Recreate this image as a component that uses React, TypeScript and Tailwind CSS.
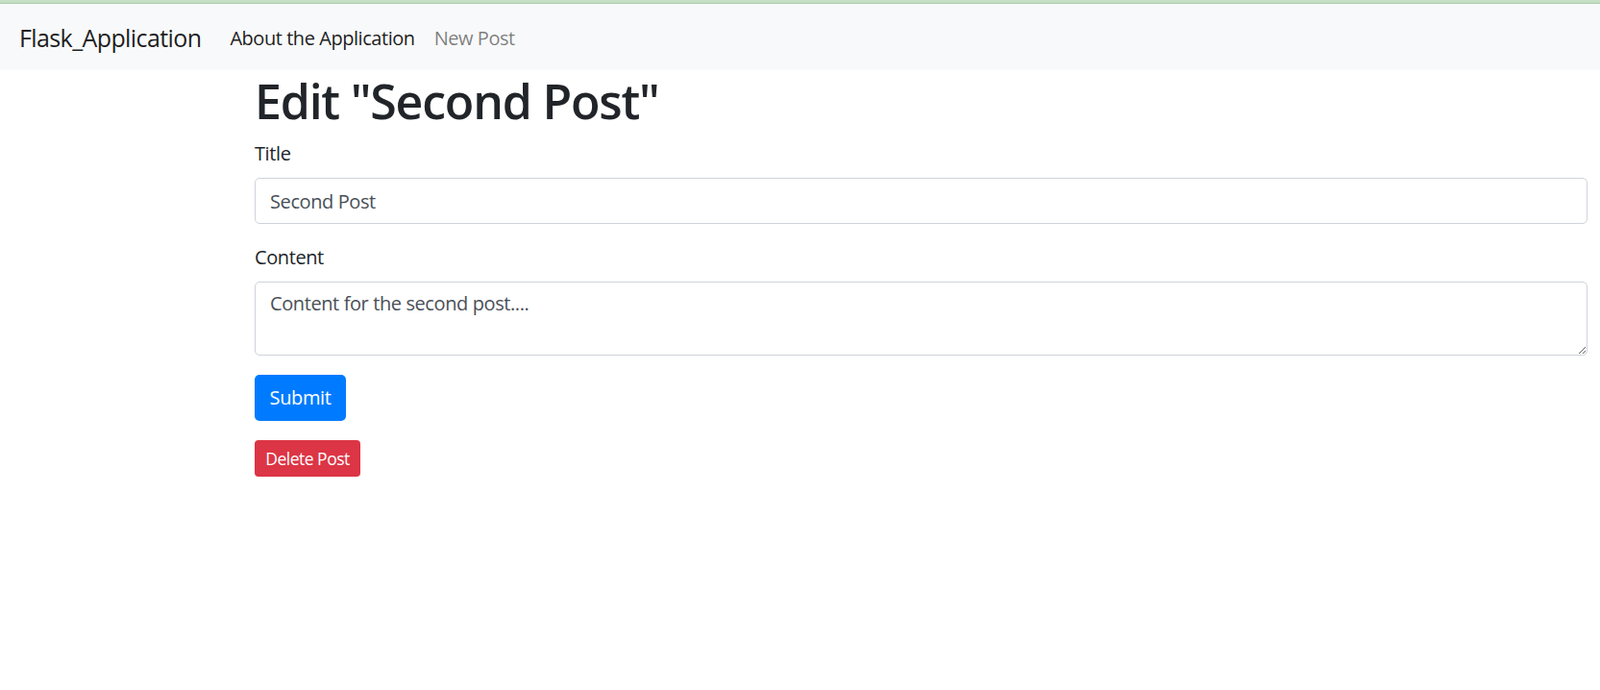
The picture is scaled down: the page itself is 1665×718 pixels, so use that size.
import { useState } from "react";

const font = "font-['Segoe_UI','Open_Sans','Noto_Sans',sans-serif]";

function Navbar() {
  return (
    <nav className="flex h-[69px] items-center bg-[#f8f9fa] px-[20px] pt-[3px]">
      <a className="mr-[20px] text-[25px] leading-[1.5] tracking-[-0.6px] text-black/90">
        Flask_Application
      </a>
      <ul className="flex items-center">
        <li>
          <a className="block px-[10px] text-[20px] tracking-[-0.45px] text-black/90">
            About the Application
          </a>
        </li>
        <li>
          <a className="block px-[10px] text-[20px] tracking-[-0.45px] text-black/50">New Post</a>
        </li>
      </ul>
    </nav>
  );
}

export default function App() {
  const [title, setTitle] = useState("Second Post");
  const [content, setContent] = useState("Content for the second post....");

  return (
    <div className={`min-h-[718px] bg-white text-[#212529] ${font}`}>
      <div className="h-[3px] bg-[#c6e0c6]" />
      <div className="h-px bg-[#a9cca9]" />
      <Navbar />
      <main className="pl-[265px] pr-[13px] pt-[2px]">
        <h1 className="mb-[10px] text-[50px] font-semibold leading-[1.2] tracking-[-1.2px]">
          Edit "Second Post"
        </h1>
        <form onSubmit={(e) => e.preventDefault()}>
          <div className="mb-[20px]">
            <label className="mb-[10px] block text-[20px] leading-[30px] tracking-[-0.4px]">Title</label>
            <input
              value={title}
              onChange={(e) => setTitle(e.target.value)}
              className="block h-[48px] w-full rounded-[5px] border border-[#ced4da] px-[15px] text-[20px] tracking-[-0.4px] text-[#495057] outline-none"
            />
          </div>
          <div className="mb-[20px]">
            <label className="mb-[10px] block text-[20px] leading-[30px] tracking-[-0.4px]">Content</label>
            <textarea
              rows={2}
              value={content}
              onChange={(e) => setContent(e.target.value)}
              className="block h-[77px] w-full rounded-[5px] border border-[#ced4da] px-[15px] py-[7px] text-[20px] leading-[30px] tracking-[-0.4px] text-[#495057] outline-none"
            />
          </div>
          <button
            type="submit"
            className="mb-[20px] h-[48px] w-[95px] rounded-[5px] bg-[#007bff] text-[20px] tracking-[-0.4px] text-white"
          >
            Submit
          </button>
        </form>
        <button className="h-[38px] w-[110px] rounded-[4px] bg-[#dc3545] text-[17.5px] tracking-[-0.5px] text-white">
          Delete Post
        </button>
      </main>
    </div>
  );
}
